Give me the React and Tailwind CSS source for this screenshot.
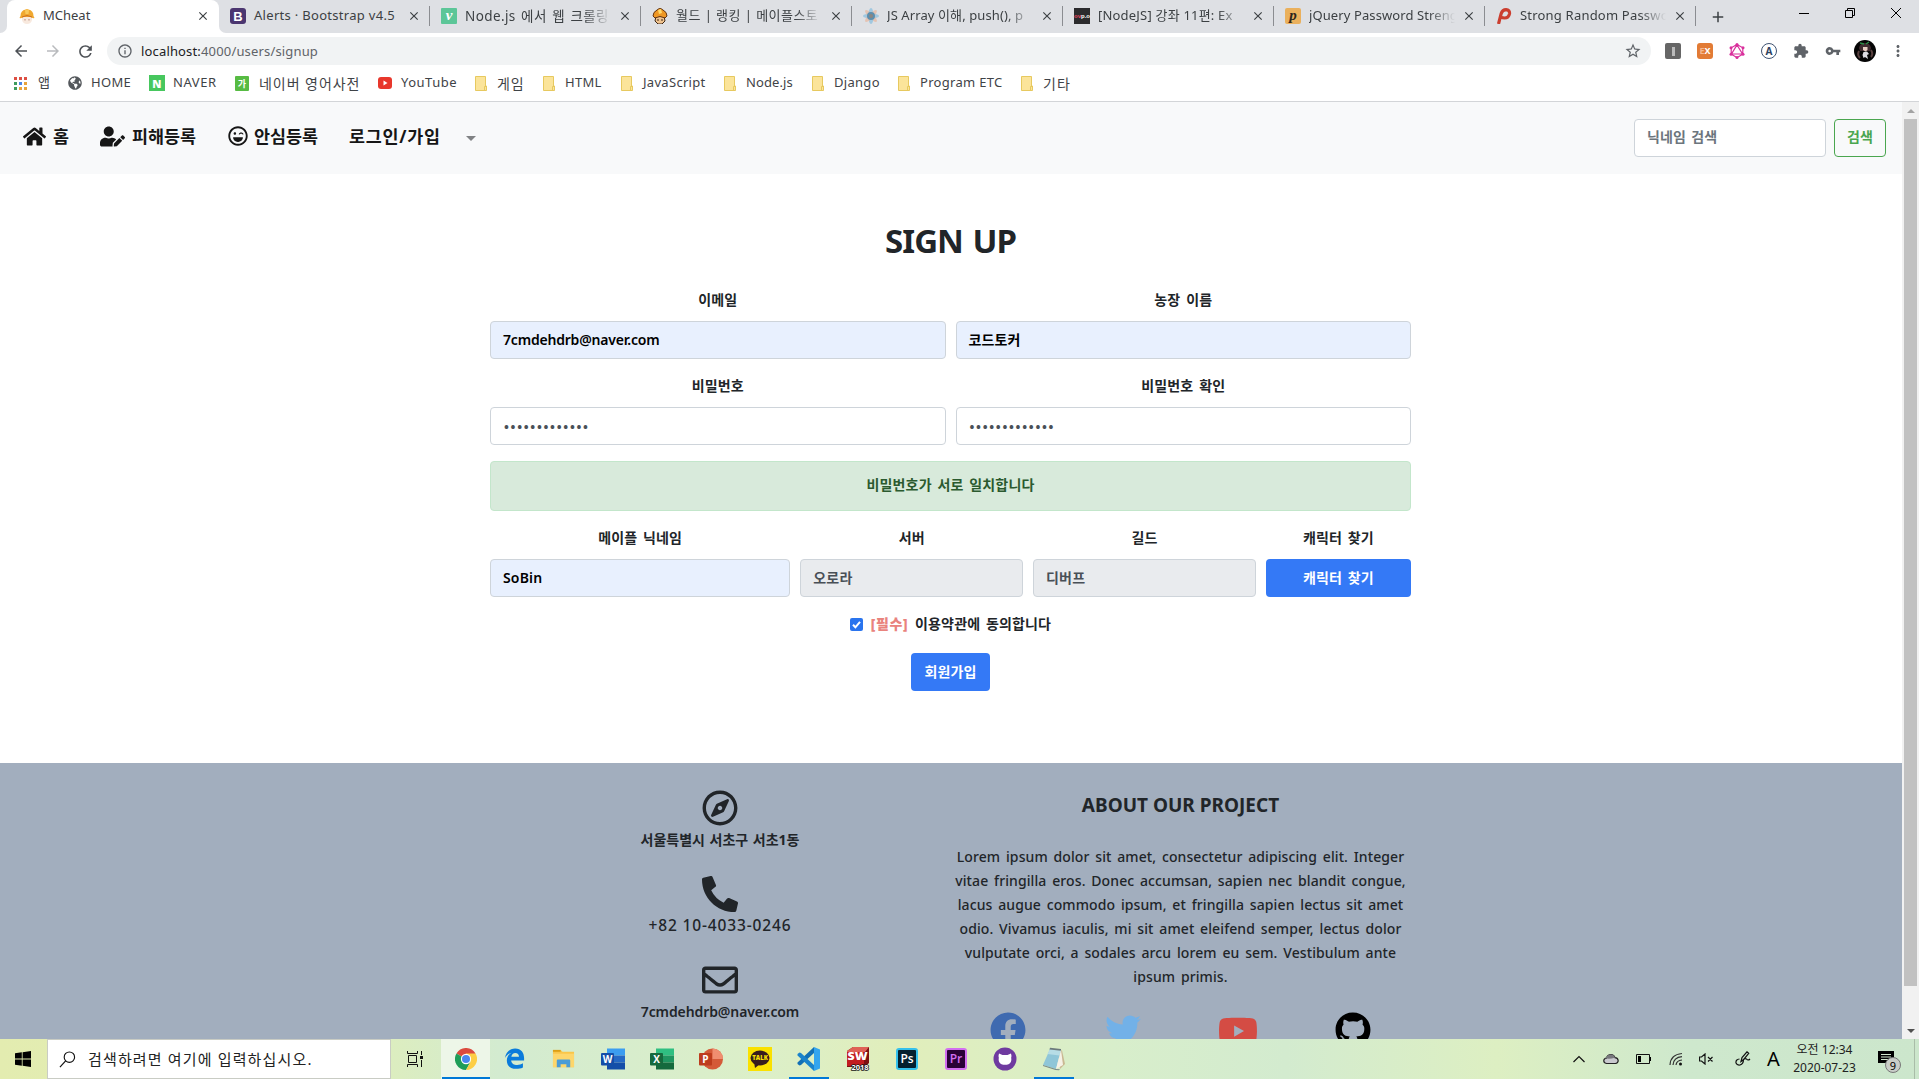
import React from "react";
import { FaHome, FaUserEdit, FaRegLaughWink, FaRegCompass, FaPhoneAlt, FaRegEnvelope, FaFacebook, FaTwitter, FaYoutube, FaGithub, FaGlobeAmericas } from "react-icons/fa";
import { MdArrowBack, MdArrowForward, MdRefresh, MdInfoOutline, MdStarBorder, MdExtension, MdVpnKey, MdMoreVert, MdClose, MdAdd } from "react-icons/md";

const UI = "font-['Noto_Sans','Noto_Sans_CJK_KR',sans-serif]";

/* ---------- favicons ---------- */
const Helmet = () => (
  <svg viewBox="0 0 16 16" className="size-4">
    <path d="M3 8h10v4q-1 4-5 4t-5-4z" fill="#f8e9de" />
    <path d="M1.500 8q0-5.500 5-6.500Q8 .5 9.500 1.500q5 1 5 6.500l1 2q-2.500.5-4-1H4.500Q3 10.500.5 10z" fill="#f0a830" />
    <path d="M6 2.500q2-2 4 0L9.500 6h-3z" fill="#f9c95c" />
    <path d="M3 9q5-3 10 0" stroke="#cf6f22" fill="none" />
    <path d="M6 11v1.500M10 11v1.500" stroke="#b98b78" />
  </svg>
);
const Bootstrap = () => (
  <span className="flex size-4 items-center justify-center rounded-[3px] bg-[#4b3670] font-['Liberation_Sans',sans-serif] text-[13px] leading-none font-bold text-white">B</span>
);
const Velog = () => (
  <span className="flex size-4 items-center justify-center rounded-[1px] bg-[#5cc698] pb-[2px] font-['Liberation_Serif',serif] text-[15px] leading-none font-bold text-white italic">v</span>
);
const Mushroom = () => (
  <svg viewBox="0 0 16 16" className="size-4">
    <path d="M4 8h8l1 5-3 3H6l-3-3z" fill="#f1c48f" stroke="#3a2413" />
    <path d="M1 8q0-4 4-6l3-2 3 2q4 2 4 6l-2 2q-5-3-10 0z" fill="#ee9724" stroke="#633412" />
    <path d="M6 2l3-1 1 4-3 1z" fill="#ffda6b" />
    <path d="M6 11v2M10 11v2" stroke="#3a2413" />
  </svg>
);
const Flower = () => (
  <svg viewBox="0 0 16 16" className="size-4">
    {[0, 45, 90, 135].map((a, i) => (
      <ellipse key={a} cx="8" cy="8" rx="8" ry="2.6" transform={`rotate(${a} 8 8)`} fill={i % 2 ? "#e6b9a3" : "#8cc0df"} opacity=".75" />
    ))}
    <circle cx="8" cy="8" r="4" fill="#5d8fae" />
    <circle cx="8" cy="8" r="2" fill="#8d8681" />
  </svg>
);
const Ovpro = () => (
  <span className="flex size-4 items-center justify-center bg-[#2b2b2d] font-['Liberation_Sans',sans-serif] text-[6px] leading-none font-bold text-white"><b className="text-[#e9475d]">ov</b>p.o</span>
);
const JqScript = () => (
  <span className="flex size-4 items-center justify-center rounded-[2px] bg-[#eab05c] pb-[2px] font-['Liberation_Serif',serif] text-[15px] leading-none font-bold text-[#2c241b] italic">p</span>
);
const RedP = () => (
  <svg viewBox="0 0 16 16" className="size-4">
    <path d="M2.500 16L5.200 5.500Q6.500 1.700 10 1.700q4 .3 3.500 4-.8 4.300-5 4.300-2 0-3-.8" fill="none" stroke="#cb3e2f" strokeWidth="3.200" />
  </svg>
);

const tabs = [
  { title: "Alerts · Bootstrap v4.5", icon: Bootstrap, cls: "tracking-[0.3px]" },
  { title: "Node.js 에서 웹 크롤링", icon: Velog, cls: "text-[13.500px] tracking-[0.4px] [word-spacing:1.500px]", fade: true },
  { title: "월드 | 랭킹 | 메이플스토", icon: Mushroom, cls: "tracking-[0.45px]", fade: true },
  { title: "JS Array 이해, push(), p", icon: Flower, cls: "tracking-[0.1px]", fade: true },
  { title: "[NodeJS] 강좌 11편: Ex", icon: Ovpro, cls: "tracking-[0.2px]", fade: true },
  { title: "jQuery Password Streng", icon: JqScript, cls: "tracking-[0.1px]", fade: true },
  { title: "Strong Random Passwo", icon: RedP, cls: "tracking-[0.2px]", fade: true },
];

function TabStrip() {
  return (
    <div className="flex h-[33px] shrink-0 bg-[#dee0e4] text-[13px] text-[#3c4043]">
      <div className="flex w-[7px] bg-white"><div className="w-full rounded-br-[7px] bg-[#dee0e4]" /></div>
      <div className="flex h-full w-[212px] items-center rounded-t-[8px] bg-white pr-[9px] pb-px pl-3">
        <Helmet />
        <span className="ml-2 flex-1">MCheat</span>
        <MdClose className="size-[14px]" />
      </div>
      {tabs.map(({ title, icon: Icon, cls, fade }, i) => (
        <div key={title} className="h-full w-[211px] bg-white">
          <div className={"flex h-full w-full items-center bg-[#dee0e4] pb-px pl-[11px] " + (i === 0 ? "rounded-bl-[7px]" : "")}>
            <Icon />
            <span className={"ml-2 w-[146px] whitespace-nowrap " + cls + (fade ? " [mask-image:linear-gradient(to_right,black_82%,transparent_100%)]" : "")}>{title}</span>
            <MdClose className="ml-[7px] size-[14px] shrink-0" />
            {i > 0 || tabs.length > 1 ? <i className="ml-auto h-5 w-px bg-[#8b8d91]" /> : null}
          </div>
        </div>
      ))}
      <div className="flex flex-1 items-center pl-[13px]">
        <MdAdd className="size-[18px]" />
      </div>
      <div className="flex items-start gap-[34px] pt-[7px] pr-[17px]">
        <svg className="size-3" viewBox="0 0 12 12"><path d="M1 6.500h10" stroke="#000" /></svg>
        <svg className="size-3" viewBox="0 0 12 12"><path d="M1.500 3.500h7v7h-7zM3.500 3V1.500h7v7H9" stroke="#000" fill="none" /></svg>
        <svg className="size-3" viewBox="0 0 12 12"><path d="M1 1l10 10M11 1L1 11" stroke="#000" /></svg>
      </div>
    </div>
  );
}

function Toolbar() {
  return (
    <div className="flex h-9 shrink-0 items-center text-[#5f6368]">
      <div className="flex w-[107px] items-center gap-[14px] pl-3">
        <MdArrowBack className="size-[18px] text-[#4d5156]" />
        <MdArrowForward className="size-[18px] text-[#b9bbbe]" />
        <MdRefresh className="size-[19px] text-[#4d5156]" />
      </div>
      <div className="flex h-7 w-[1544px] items-center rounded-full bg-[#f1f3f4] pr-[9px] pl-[10px]">
        <MdInfoOutline className="size-4" />
        <span className="mt-px ml-2 flex-1 text-[13px] tracking-[0.16px]"><span className="text-[#202124]">localhost:</span>4000/users/signup</span>
        <MdStarBorder className="size-[18px]" />
      </div>
      <div className="ml-[14px] flex items-center gap-4">
        <span className="flex size-4 items-center justify-center rounded-[2px] bg-[#666]"><i className="h-[9px] w-[3px] bg-[#bbb]" /></span>
        <span className="flex size-4 items-center justify-center rounded-[3px] bg-[#e27b35] text-[9px] font-bold text-white"><span className="text-[#f6b78d]">E</span>X</span>
        <svg viewBox="0 0 16 16" className="size-4" fill="none" stroke="#d9309c" strokeWidth="1.200">
          <path d="M8 1.500l5.800 3.300v6.400L8 14.500l-5.800-3.300V4.800zM8 2l5.500 9h-11z" />
          <g fill="#d9309c" stroke="none"><circle cx="8" cy="1.600" r="1.500" /><circle cx="14" cy="4.800" r="1.500" /><circle cx="14" cy="11.200" r="1.500" /><circle cx="8" cy="14.400" r="1.500" /><circle cx="2" cy="11.200" r="1.500" /><circle cx="2" cy="4.800" r="1.500" /></g>
        </svg>
        <span className="flex size-4 items-center justify-center rounded-full border border-[#3f5372] text-[10px] leading-none font-bold text-[#2d4261]">A</span>
        <MdExtension className="size-4" />
        <MdVpnKey className="size-4" />
        <svg viewBox="0 0 22 22" className="-mx-[3px] size-[22px]">
          <circle cx="11" cy="11" r="11" fill="#050505" />
          <path d="M5 8q1-5 6-5t6 5l-1 3H6z" fill="#412c30" />
          <path d="M6 3l4 1M15 2l-3 2" stroke="#2a8b44" strokeWidth="1.500" />
          <path d="M9 7h4.500v3l-2 1.500L9 10z" fill="#e8cfc3" />
          <path d="M9.500 12l3.500-.5 2 2.500-2 1 1 4-3-2-1.500 1-1-3z" fill="#dcdce2" />
          <path d="M5 11q-2 4 1 7M17 10q2.500 4 0 7" stroke="#59403f" strokeWidth="2" fill="none" />
        </svg>
        <MdMoreVert className="size-[18px]" />
      </div>
    </div>
  );
}

const Folder = () => (
  <svg viewBox="0 0 12 15" className="h-[15px] w-3 shrink-0">
    <path d="M.5.500h10v9.500h1v4.500H.5z" fill="#fbe49a" stroke="#e7c95f" />
    <path d="M9.500 14v-3.500h1.500" fill="none" stroke="#e7c95f" />
  </svg>
);

function Bookmark({ icon, label, width, textClass = "" }) {
  return (
    <div className={"flex shrink-0 items-center whitespace-nowrap " + width}>
      {icon}
      <span className={textClass}>{label}</span>
    </div>
  );
}

function Bookmarks() {
  const dots = ["#dd4f43", "#dd4f43", "#dd4f43", "#3f9b5d", "#4a86e8", "#e8a33a", "#3f9b5d", "#e8a33a", "#e8a33a"];
  return (
    <div className="flex h-[33px] shrink-0 items-center border-b border-[#d3d5d8] pb-1 pl-[14px] text-[13px] tracking-[0.3px] text-[#3f4347]">
      <Bookmark width="w-[54px]" textClass="ml-[11px]" label="앱" icon={
        <span className="grid grid-cols-3 gap-[2px]">{dots.map((c, i) => <i key={i} className="size-[3px]" style={{ backgroundColor: c }} />)}</span>} />
      <Bookmark width="w-[81px]" textClass="ml-[9px]" label="HOME" icon={<FaGlobeAmericas className="size-[14px] text-[#54585c]" />} />
      <Bookmark width="w-[86px]" textClass="ml-2 tracking-[0.6px]" label="NAVER" icon={
        <span className="flex size-4 items-center justify-center bg-[#47c75e] text-[11px] leading-none font-black text-white">N</span>} />
      <Bookmark width="w-[143px]" textClass="ml-[10px] text-[14px] tracking-[0.95px]" label="네이버 영어사전" icon={
        <span className="flex h-[15px] w-[14px] items-center justify-center rounded-[1px] bg-[#57bb43] text-[9px] leading-none font-bold text-white">가</span>} />
      <Bookmark width="w-[97px]" textClass="ml-[9px] tracking-[0.5px]" label="YouTube" icon={
        <svg viewBox="0 0 14 12" className="h-3 w-[14px]"><rect width="14" height="12" rx="3" fill="#e8372c" /><path d="M5.500 3.500v5l4-2.500z" fill="#fff" /></svg>} />
      <Bookmark width="w-[68px]" textClass="ml-[10px] text-[14px] tracking-[0.8px]" label="게임" icon={<Folder />} />
      <Bookmark width="w-[78px]" textClass="ml-[10px]" label="HTML" icon={<Folder />} />
      <Bookmark width="w-[103px]" textClass="ml-[10px]" label="JavaScript" icon={<Folder />} />
      <Bookmark width="w-[88px]" textClass="ml-[10px] tracking-[0.1px]" label="Node.js" icon={<Folder />} />
      <Bookmark width="w-[86px]" textClass="ml-[10px]" label="Django" icon={<Folder />} />
      <Bookmark width="w-[123px]" textClass="ml-[10px]" label="Program ETC" icon={<Folder />} />
      <Bookmark width="w-[70px]" textClass="ml-[10px] text-[14px] tracking-[1px]" label="기타" icon={<Folder />} />
    </div>
  );
}

/* ---------- page ---------- */
function Navbar() {
  return (
    <nav className="flex h-[72px] shrink-0 items-center bg-[#f8f9fa] pr-4 pl-[23px] text-[17.4px] font-bold whitespace-nowrap text-[#161616]">
      <div className="-mt-[3px] flex w-[77px] items-center gap-[7px]"><FaHome className="size-[23px]" />홈</div>
      <div className="-mt-[3px] flex w-[128px] items-center gap-[7px]"><FaUserEdit className="size-[25px]" />피해등록</div>
      <div className="-mt-[3px] flex w-[121px] items-center gap-[6px]"><FaRegLaughWink className="size-5" />안심등록</div>
      <div className="-mt-[3px] w-[117px] tracking-[0.75px]">로그인/가입</div>
      <i className="border-x-[5px] border-t-[5px] border-x-transparent border-t-[#808284]" />
      <div className="ml-auto flex gap-2 text-[14px]">
        <div className="flex h-[38px] w-[192px] items-center rounded border border-[#ced4da] bg-white px-3 pb-[3px] tracking-[0.1px] text-[#6c757d] [word-spacing:1.500px]">닉네임 검색</div>
        <button className="h-[38px] w-[52px] rounded border border-[#4aa64f] pb-[3px] text-[#4aa64f]">검색</button>
      </div>
    </nav>
  );
}

function Field({ label, value, width, tone = "bg-[#e8f0fe] text-black", textClass = "" }) {
  return (
    <div className={"px-[5px] " + width}>
      <label className="mb-2 block h-6 text-center leading-[22px]">{label}</label>
      <div className={"flex h-[38px] items-center rounded border border-[#ced4da] px-3 pb-[2px] " + tone}>
        <span className={textClass}>{value}</span>
      </div>
    </div>
  );
}

function SignupForm() {
  const dots = "•".repeat(13);
  return (
    <main className="ml-[490px] flex h-[589px] w-[921px] shrink-0 flex-col pt-[43px] text-[14px] font-bold tracking-[0.15px] text-[#212529] [word-spacing:2px]">
      <h1 className="mb-6 text-center text-[33px] leading-[48px] font-bold tracking-[-1px]">SIGN UP</h1>
      <div className="-mx-[5px] mb-4 flex">
        <Field label="이메일" value="7cmdehdrb@naver.com" width="w-1/2" textClass="font-semibold tracking-[-0.2px]" />
        <Field label="농장 이름" value="코드토커" width="w-1/2" />
      </div>
      <div className="-mx-[5px] mb-4 flex">
        <Field label="비밀번호" value={dots} width="w-1/2" tone="bg-white text-[#495057]" textClass="mt-[5px] ml-px text-[13px] tracking-[1.700px]" />
        <Field label="비밀번호 확인" value={dots} width="w-1/2" tone="bg-white text-[#495057]" textClass="mt-[5px] ml-px text-[13px] tracking-[1.700px]" />
      </div>
      <div className="mb-4 flex h-[50px] shrink-0 items-center justify-center rounded border border-[#c3e6cb] bg-[#d8eadb] pb-[3px] text-[#2b5a2f]">비밀번호가 서로 일치합니다</div>
      <div className="-mx-[5px] mb-4 flex">
        <Field label="메이플 닉네임" value="SoBin" width="w-1/3" textClass="font-semibold" />
        <Field label="서버" value="오로라" width="w-1/4" tone="bg-[#e9ebee] text-[#495057]" />
        <Field label="길드" value="디버프" width="w-1/4" tone="bg-[#e9ebee] text-[#495057]" />
        <div className="w-1/6 px-[5px]">
          <label className="mb-2 block h-6 text-center leading-[22px]">캐릭터 찾기</label>
          <button className="h-[38px] w-full rounded bg-[#3479f6] pb-[2px] text-white [word-spacing:2px]">캐릭터 찾기</button>
        </div>
      </div>
      <div className="mb-4 flex h-6 items-center justify-center pb-[2px]">
        <span className="mr-2 flex size-[13px] items-center justify-center rounded-[2px] bg-[#2a74ee]">
          <svg viewBox="0 0 13 13" className="size-[13px]"><path d="M3 6.800l2.400 2.500L10 3.800" fill="none" stroke="#fff" strokeWidth="2" /></svg>
        </span>
        <span className="-mt-px mr-[7px] font-black tracking-[0.6px] text-[#e9837d]">[필수]</span>
        <span className="-mt-px">이용약관에 동의합니다</span>
      </div>
      <button className="mx-auto h-[38px] w-[79px] rounded bg-[#3479f6] pb-[2px] text-white">회원가입</button>
    </main>
  );
}

const lorem = [
  "Lorem ipsum dolor sit amet, consectetur adipiscing elit. Integer",
  "vitae fringilla eros. Donec accumsan, sapien nec blandit congue,",
  "lacus augue commodo ipsum, et fringilla sapien lectus sit amet",
  "odio. Vivamus iaculis, mi sit amet eleifend semper, lectus dolor",
  "vulputate orci, a sodales arcu lorem eu sem. Vestibulum ante",
  "ipsum primis.",
];

function Contact({ icon, children }) {
  return (
    <div className="mb-[26px] flex h-[60px] flex-col items-center">
      <div className="flex h-9 items-center">{icon}</div>
      <p className="mt-px h-6 leading-[25px]">{children}</p>
    </div>
  );
}

function Footer() {
  return (
    <footer className="flex h-[300px] shrink-0 bg-[#a2aebe] pl-[490px] text-[14px] font-semibold text-[#212529]">
      <div className="w-[460px] pt-[27px]">
        <Contact icon={<FaRegCompass className="size-9" />}><span className="font-bold [word-spacing:1px]">서울특별시 서초구 서초1동</span></Contact>
        <Contact icon={<FaPhoneAlt className="size-9" />}><span className="text-[15.500px] font-medium tracking-[0.85px]">+82 10-4033-0246</span></Contact>
        <Contact icon={<FaRegEnvelope className="size-9" />}><span className="tracking-[-0.1px]">7cmdehdrb@naver.com</span></Contact>
      </div>
      <div className="w-[461px] pt-[30px] text-center">
        <h2 className="mb-[28px] text-[19px] leading-6 font-bold">ABOUT OUR PROJECT</h2>
        <div className="font-medium tracking-[0.1px] [word-spacing:2px]">
          {lorem.map((line) => <p key={line} className="leading-6 whitespace-nowrap">{line}</p>)}
        </div>
        <div className="mt-[23px] grid grid-cols-4 justify-items-center">
          <FaFacebook className="size-9 text-[#3f6ab0]" />
          <FaTwitter className="size-9 text-[#72b1e8]" />
          <FaYoutube className="size-10 -mt-px text-[#d44c44]" />
          <FaGithub className="size-9 text-black" />
        </div>
      </div>
    </footer>
  );
}

function Scrollbar() {
  return (
    <div className="flex w-[17px] flex-col items-center bg-[#f1f1f1]">
      <div className="flex h-[17px] items-center"><i className="border-x-4 border-b-4 border-x-transparent border-b-[#a3a3a3]" /></div>
      <div className="h-[867px] w-[13px] bg-[#c1c1c1]" />
      <div className="mt-auto flex h-[17px] items-center"><i className="border-x-4 border-t-4 border-x-transparent border-t-[#505050]" /></div>
    </div>
  );
}

/* ---------- taskbar ---------- */
const Chrome = () => (
  <svg viewBox="0 0 24 24" className="size-[22px]">
    <path d="M12 12L1.600 6A12 12 0 0 1 22.400 6z" fill="#db4a3f" />
    <path d="M12 12L1.600 6A12 12 0 0 0 12 24l5-9z" fill="#1f9d58" />
    <path d="M12 12h0l5 3-5 9A12 12 0 0 0 22.400 6H12z" fill="#fdce45" />
    <circle cx="12" cy="12" r="5.600" fill="#fff" /><circle cx="12" cy="12" r="4.400" fill="#4a87f0" />
  </svg>
);
const Edge = () => (
  <svg viewBox="0 0 24 24" className="size-[23px]">
    <path d="M2 11.500C3.200 5 7.500 1.500 12.700 1.500 19 1.500 22 6 22 11.500V14H8.500c.3 3.200 3 4.700 6.300 4.700 2.200 0 4.200-.6 6-1.700v4.300c-2 1-4.500 1.500-7 1.500C7.800 22.800 4 19.500 4 14c0-3.300 1.700-6.200 4.800-7.900C5.800 6.800 3.500 8.800 2 11.500zM8.700 10.200h8c0-2.500-1.500-3.900-3.900-3.900-2.200 0-3.700 1.400-4.100 3.900z" fill="#0a7bdb" />
  </svg>
);
const Explorer = () => (
  <svg viewBox="0 0 24 24" className="size-[23px]">
    <path d="M1 3h8l2 2h12v16H1z" fill="#f9c64a" /><path d="M1 3h8v2H1z" fill="#dd9f15" /><path d="M1 7h22v14H1z" fill="#fdd66b" />
    <path d="M5 21v-7q0-1 1-1h12q1 0 1 1v7h-4v-3H9v3z" fill="#4b9cd6" />
  </svg>
);
const Office = ({ letter, dark, mid, light, round }) => (
  <svg viewBox="0 0 24 24" className="size-6">
    {round ? (
      <><circle cx="13.500" cy="12" r="10.500" fill={mid} /><path d="M13.500 1.500A10.500 10.500 0 0 1 24 12H13.500z" fill={light} /></>
    ) : (
      <><path d="M6 1.500h18v7H6z" fill={light} /><path d="M6 8.500h18v7H6z" fill={mid} /><path d="M6 15.500h18v7H6z" fill={dark} /></>
    )}
    <rect x="0" y="6" width="13" height="12.500" rx="1" fill={dark} />
    <text x="6.500" y="16" textAnchor="middle" fontSize="10" fontWeight="700" fontFamily="Open Sans, sans-serif" fill="#fff">{letter}</text>
  </svg>
);
const Kakao = () => (
  <svg viewBox="0 0 24 24" className="size-6">
    <rect width="24" height="24" fill="#fae100" /><ellipse cx="12" cy="11" rx="9.500" ry="7.500" fill="#371d1e" /><path d="M6 15l1 6 5-4z" fill="#371d1e" />
    <text x="12" y="13.300" textAnchor="middle" fontSize="6" fontWeight="800" fontFamily="Open Sans, sans-serif" fill="#fae100">TALK</text>
  </svg>
);
const Code = () => (
  <svg viewBox="0 0 24 24" className="size-6">
    <path d="M17 0v6L4 18l-1.500.5L.5 17v-1.500z" fill="#1270b5" /><path d="M17 24v-6L4 6 2.500 5.500.5 7v1.500z" fill="#1a83cb" /><path d="M17 0l6 2.500v19L17 24z" fill="#34a5ee" />
  </svg>
);
const SolidWorks = () => (
  <svg viewBox="0 0 24 24" className="size-6">
    <path d="M1 4l6-4h16v16l-4 4H1z" fill="#7d0f12" /><path d="M1 4l6-4h16l-4 5H1z" fill="#df6156" /><path d="M1 5h17v14H1z" fill="#c21c20" />
    <text x="11.500" y="13" textAnchor="middle" fontSize="10" fontWeight="800" fontFamily="Open Sans, sans-serif" fill="#fff" textLength="20" lengthAdjust="spacingAndGlyphs">SW</text>
    <text x="14" y="23.200" textAnchor="middle" fontSize="7.500" fontWeight="700" fontFamily="Open Sans, sans-serif" fill="#fff" stroke="#111" strokeWidth="1.600" paintOrder="stroke">2018</text>
  </svg>
);
const Adobe = ({ text, bg, fg }) => (
  <svg viewBox="0 0 24 24" className="size-6">
    <rect x="2" y="2" width="20" height="20" rx="2" fill={bg} stroke={fg} strokeWidth="2" />
    <text x="12" y="16" textAnchor="middle" fontSize="12" fontWeight="600" fontFamily="Open Sans, sans-serif" fill={text === "Ps" ? "#fff" : fg}>{text}</text>
  </svg>
);
const GithubDesktop = () => (
  <svg viewBox="0 0 24 24" className="size-6">
    <circle cx="12" cy="12" r="11.500" fill="#6f3aa0" />
    <path d="M6 6.500l3.500 1.600h5L18 6.500q.7 2 .2 4 .8 5-2.700 6.700-3.500 1.300-7 0Q5 15.500 5.800 10.500q-.5-2 .2-4z" fill="#fff" />
  </svg>
);
const Notepad = () => (
  <svg viewBox="0 0 24 24" className="size-6">
    <path d="M17 3l3 .5L23 17l-5 5z" fill="#c9b892" />
    <path d="M8 2l11 1-5 19L1 18z" fill="#8fc6d8" />
    <path d="M8 2l11 1-1.500 5.500L5.500 7z" fill="#b7dde6" />
    <path d="M8 .8l11 1.200v1.800L7.500 2.600z" fill="#6d7a7c" />
    <path d="M14 22l5-19 2 15z" fill="#f6f1e6" />
    <path d="M1 18l13 4 4 .3-1 .9-3.500-.2L1 19z" fill="#7c8a86" />
  </svg>
);

const apps = [
  { el: <Chrome />, active: true, bar: "w-12" },
  { el: <Edge /> },
  { el: <Explorer /> },
  { el: <Office letter="W" dark="#144ea8" mid="#2468c5" light="#3b9df0" /> },
  { el: <Office letter="X" dark="#156a3d" mid="#1f9560" light="#2fbf81" /> },
  { el: <Office letter="P" dark="#bd3c1d" mid="#d45a38" light="#f08e70" round /> },
  { el: <Kakao /> },
  { el: <Code />, bar: "w-10" },
  { el: <SolidWorks /> },
  { el: <Adobe text="Ps" bg="#04202f" fg="#35c0ec" /> },
  { el: <Adobe text="Pr" bg="#2a0237" fg="#d26ff0" /> },
  { el: <GithubDesktop /> },
  { el: <Notepad />, bar: "w-10" },
];

function Taskbar() {
  return (
    <div className="flex h-10 shrink-0 bg-[linear-gradient(90deg,#e3ecb0_0%,#e0eeb8_18%,#d3ebd0_26%,#dcefc8_40%,#e1eebb_47%,#d8eecb_58%,#d3ebcf_67%,#ddefc2_78%,#cee8cd_88%,#cce6cc_100%)] text-black">
      <div className="flex w-[47px] items-center justify-center">
        <svg viewBox="0 0 16 16" className="mr-[2px] size-4"><path d="M0 2.300l6.800-1v6.300H0zM7.600 1.200L16 0v7.600H7.600zM0 8.400h6.800v6.300L0 13.700zM7.600 8.400H16V16l-8.400-1.200z" /></svg>
      </div>
      <div className="flex w-[344px] items-center border border-[#c9ccc4] bg-white pl-[11px] text-[15px] text-[#222]">
        <svg viewBox="0 0 18 18" className="mr-[12px] size-[17px]"><circle cx="11" cy="6.500" r="5.500" fill="none" stroke="#111" strokeWidth="1.200" /><path d="M7 10.500L1 17" stroke="#111" strokeWidth="1.300" /></svg>
        <span className="pt-px tracking-[1.150px]">검색하려면 여기에 입력하십시오.</span>
      </div>
      <div className="flex w-[50px] items-center justify-center pr-[2px]">
        <svg viewBox="0 0 16 16" className="size-4" fill="none" stroke="#111"><path d="M.5 0v2.500h10V0M.5 16v-2.500h10V16M1.500 4.500h8v7h-8zM14.500 0v4M14.500 9v7" /><path d="M13 5h3v3h-3z" fill="#111" stroke="none" /></svg>
      </div>
      {apps.map(({ el, active, bar }, i) => (
        <div key={i} className={"flex w-[49px] flex-col items-center justify-between " + (active ? "bg-[#edf6e8]" : "")}>
          <div className="flex h-[38px] items-center pt-[1px]">{el}</div>
          <i className={"h-[2px] " + (bar ? bar + " bg-[#0078d7]" : "w-0")} />
        </div>
      ))}
      <div className="ml-auto flex items-center">
        <svg viewBox="0 0 12 8" className="mr-[18px] h-2 w-3"><path d="M.5 7L6 1.500 11.500 7" fill="none" stroke="#111" strokeWidth="1.200" /></svg>
        <svg viewBox="0 0 16 12" className="mr-[17px] h-3 w-4"><path d="M3.500 10.500Q.6 10 .8 7.500 1 5.500 3.500 5.200 4.500 1.500 8 1.500q3 0 4 3.200 3 .3 3.200 3-.2 2.300-2.700 2.800z" fill="#c9c9ce" stroke="#222" strokeWidth="1.200" /><path d="M2 5.500Q5 1 8 1.500q3 0 4 3.200Q7 6 4 5.500z" fill="#77777c" /></svg>
        <svg viewBox="0 0 15 10" className="mr-[18px] h-[10px] w-[15px]"><path d="M.5.500h13v9H.5z" fill="none" stroke="#111" /><path d="M2 2h3v6H2zM14 3h1v4h-1z" /></svg>
        <svg viewBox="0 0 14 14" className="mr-[16px] size-[14px]" fill="none" stroke="#333"><path d="M1 13Q1.500 2.500 13 1.500M4 13q.5-7.500 9-8.300M7 13q.5-4.500 6-5" strokeWidth="1.200" /><circle cx="11.500" cy="12" r="1.500" fill="#111" stroke="none" /></svg>
        <svg viewBox="0 0 15 12" className="mr-[21px] h-3 w-[15px]" fill="none" stroke="#111"><path d="M.5 4v4h2L6 11V1L2.500 4zM9 4l4.500 4.500M13.500 4L9 8.500" strokeWidth="1.200" /></svg>
        <svg viewBox="0 0 16 16" className="mr-[16px] size-4" fill="none" stroke="#111" strokeWidth="1.200"><path d="M6 10.500l1-4L12 .8l1.700 1.500-5 6.200zM4.500 8Q.5 8.500 1 12q1 2.500 4 2 3.500-1 3.500-5.500 1.500-1.500 3-.5 1.500 2 3.500 0" /></svg>
        <span className="mr-[11px] w-[13px] text-[20px] leading-none">A</span>
        <div className="mr-[20px] w-[67px] text-center text-[12px] leading-[18px] whitespace-nowrap text-[#222]">오전 12:34<br />2020-07-23</div>
        <div className="relative mr-[20px] size-4">
          <svg viewBox="0 0 16 16" className="size-4"><path d="M0 0h16v12h-5v3l-3-3H0z" /><path d="M3 3.500h10M3 6h10M3 8.500h7" stroke="#d3e8cf" /></svg>
          <span className="absolute top-[6px] left-[7px] flex size-4 items-center justify-center rounded-full border border-[#777] bg-[#c9cdc8] text-[11px] leading-none">9</span>
        </div>
        <i className="mr-1 h-10 w-px bg-[#a9bca8]" />
      </div>
    </div>
  );
}

export default function App() {
  return (
    <div className={"flex h-[1079px] w-[1919px] flex-col overflow-hidden bg-white " + UI}>
      <TabStrip />
      <Toolbar />
      <Bookmarks />
      <div className="flex h-[937px] shrink-0 overflow-hidden">
        <div className="flex w-[1902px] flex-col">
          <Navbar />
          <SignupForm />
          <Footer />
        </div>
        <Scrollbar />
      </div>
      <Taskbar />
    </div>
  );
}
